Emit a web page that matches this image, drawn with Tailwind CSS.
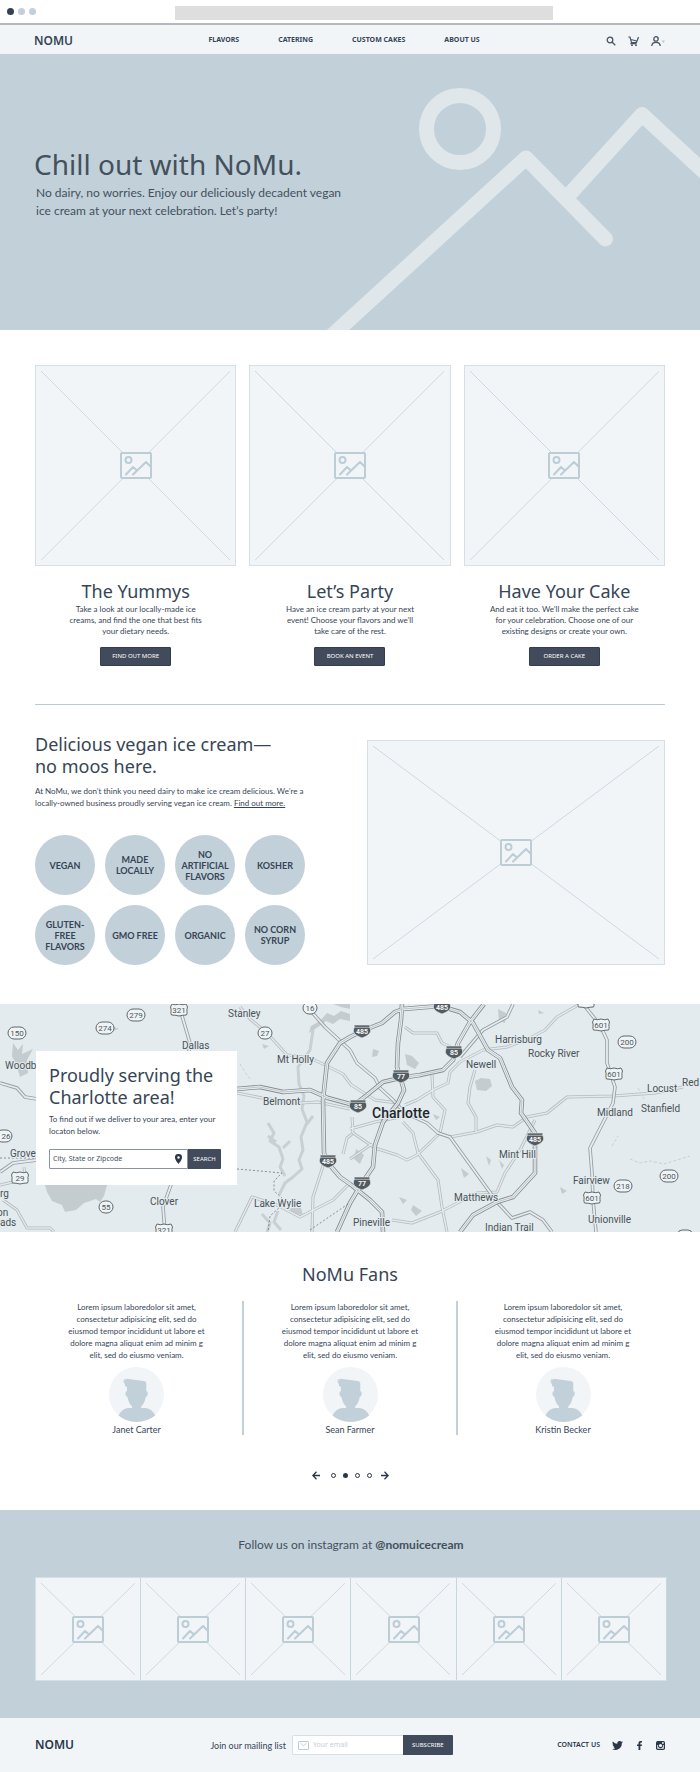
<!DOCTYPE html>
<html lang="en">
  <head>
    <meta charset="UTF-8" />
    <meta name="viewport" content="width=device-width, initial-scale=1.0" />
    <script src="https://cdn.jsdelivr.net/npm/@tailwindcss/browser@4"></script>
    <title>NoMu Vegan Ice Cream</title>
  </head>
  <body class="bg-white text-[#364556] font-['Noto_Sans','Open_Sans',sans-serif]">
    <!-- shared icons -->
    <svg class="hidden">
      <symbol id="picture" viewBox="0 0 32 27">
        <g fill="none" stroke="#bccdd6" stroke-width="2" stroke-linecap="round" stroke-linejoin="round">
          <rect x="1" y="1" width="30" height="25" rx="1" fill="#f1f5f8" />
          <circle cx="8.500" cy="8" r="3" />
          <path d="M6 22.500 13 15l4 3.500M13 22.500 26 10l5 5" />
        </g>
      </symbol>
      <symbol id="cross" viewBox="0 0 100 100" preserveAspectRatio="none">
        <path d="M0 0 100 100M100 0 0 100" stroke="#cdd9df" stroke-width="1" vector-effect="non-scaling-stroke" />
      </symbol>
      <symbol id="avatar" viewBox="0 0 55 55">
        <circle cx="27.500" cy="27.500" r="27.500" fill="#f1f5f8" />
        <path fill="#c2d0d9" d="M14 13.500l2 .3-1.500-1.800 2.500.6.7-.9 17 2.200c1.800.3 2.600 1.200 2.600 3V24c2.200.5 1.800 5.500-.6 6-.5 4-2 7-4.500 9.200V41h4.500c4 .5 7.500 3 9.500 7.500Q38 55 27.500 55T9.500 48.500C11.500 44 15 41.500 19 41h4v-1.800c-2.500-2.200-4-5.200-4.500-9.200-2.400-.5-2.800-5.500-.6-6l.1-4c-2-.5-2.500-2-2-2.500z" />
      </symbol>
    </svg>

    <!-- browser bar -->
    <div class="relative flex items-center justify-between h-[25px] px-[7px] border-b-2 border-[#b7b7c0]">
      <div class="flex gap-1">
        <span class="size-[7px] rounded-full bg-[#364052]"></span>
        <span class="size-[7px] rounded-full bg-[#c2d0d9]"></span>
        <span class="size-[7px] rounded-full bg-[#c2d0d9]"></span>
      </div>
      <div class="absolute left-1/4 top-1.5 w-[54%] h-3.5 bg-[#dedede]"></div>
    </div>

    <header class="flex items-center justify-between h-[29px] pt-0.5 pl-[34px] pr-[35px] bg-[#f1f5f8]">
      <a href="#" class="text-[12px] font-semibold">NOMU</a>
      <nav class="flex gap-[39px] pl-[9px] text-[7px] font-bold">
        <a href="#">FLAVORS</a>
        <a href="#">CATERING</a>
        <a href="#">CUSTOM CAKES</a>
        <a href="#">ABOUT US</a>
      </nav>
      <div class="flex items-center gap-3">
        <button aria-label="Search">
          <svg class="size-[10px]" viewBox="0 0 10 10" fill="none" stroke="#4a5463" stroke-width="1.300"><circle cx="4" cy="4" r="2.800" /><path d="M6 6l3.300 3.300" /></svg>
        </button>
        <button aria-label="Cart">
          <svg class="w-[11px] h-[10px]" viewBox="0 0 11 10" fill="none" stroke="#4a5463" stroke-width="1.200"><path d="M.3 1h1.700l1.500 5.500h5L10.500 1M3 3.500l5.500 1.500M3.500 6.500 3 7.700h5.500" /><circle cx="4" cy="9.200" r=".4" /><circle cx="8" cy="9.200" r=".4" /></svg>
        </button>
        <button aria-label="Account">
          <svg class="w-[14px] h-[10px]" viewBox="0 0 14 10" fill="none" stroke="#4a5463" stroke-width="1.300"><circle cx="5" cy="2.900" r="2.200" /><path d="M.8 10c0-3 2-3.600 4.200-3.600S9.200 7 9.200 10" /><path d="M10.500 4.500h3.500l-1.700 2.500z" fill="#b9cad4" stroke="none" /></svg>
        </button>
      </div>
    </header>

    <!-- hero -->
    <section class="relative h-[276px] pt-[91px] bg-[#c2d0d9] overflow-hidden">
      <svg class="absolute inset-0 size-full" viewBox="0 0 700 276" preserveAspectRatio="xMaxYMid slice" fill="none" stroke="#dfe7eb" stroke-width="15" stroke-linecap="round" stroke-linejoin="round">
        <circle cx="460" cy="75" r="33.500" />
        <path d="M326 287 526 104l79.500 81M568 142l74-81.500 66 61" />
      </svg>
      <div class="relative text-[#43515d]">
        <h1 class="pl-[34px] text-[28px] leading-[38px]">Chill out with NoMu.</h1>
        <p class="mt-px pl-9 font-[Lato,sans-serif] text-[12px] leading-[18px]">No dairy, no worries. Enjoy our deliciously decadent vegan<br />ice cream at your next celebration. Let’s party!</p>
      </div>
    </section>

    <!-- products -->
    <section class="grid grid-cols-3 gap-x-[13px] mx-[35px] pt-[35px] pb-[38px] border-b border-[#b9cad4] text-center">
      <div>
        <div class="relative flex items-center justify-center aspect-square bg-[#f1f5f8] border border-[#d5e0e5]">
          <svg class="absolute inset-[5px] size-[calc(100%-10px)]"><use href="#cross" /></svg>
          <svg class="relative w-8 h-[27px]"><use href="#picture" /></svg>
        </div>
        <h2 class="mt-[13px] text-[18px] leading-6">The Yummys</h2>
        <p class="mt-px font-[Lato,sans-serif] text-[8px] leading-[11px]">Take a look at our locally-made ice<br />creams, and find the one that best fits<br />your dietary needs.</p>
        <button class="mt-[10px] block mx-auto w-[71px] h-[19px] rounded-[1px] bg-[#424b5b] border border-[#333d4e] text-[6px] leading-[17px] text-white">FIND OUT MORE</button>
      </div>
      <div>
        <div class="relative flex items-center justify-center aspect-square bg-[#f1f5f8] border border-[#d5e0e5]">
          <svg class="absolute inset-[5px] size-[calc(100%-10px)]"><use href="#cross" /></svg>
          <svg class="relative w-8 h-[27px]"><use href="#picture" /></svg>
        </div>
        <h2 class="mt-[13px] text-[18px] leading-6">Let’s Party</h2>
        <p class="mt-px font-[Lato,sans-serif] text-[8px] leading-[11px]">Have an ice cream party at your next<br />event! Choose your flavors and we’ll<br />take care of the rest.</p>
        <button class="mt-[10px] block mx-auto w-[71px] h-[19px] rounded-[1px] bg-[#424b5b] border border-[#333d4e] text-[6px] leading-[17px] text-white">BOOK AN EVENT</button>
      </div>
      <div>
        <div class="relative flex items-center justify-center aspect-square bg-[#f1f5f8] border border-[#d5e0e5]">
          <svg class="absolute inset-[5px] size-[calc(100%-10px)]"><use href="#cross" /></svg>
          <svg class="relative w-8 h-[27px]"><use href="#picture" /></svg>
        </div>
        <h2 class="mt-[13px] text-[18px] leading-6">Have Your Cake</h2>
        <p class="mt-px font-[Lato,sans-serif] text-[8px] leading-[11px]">And eat it too. We’ll make the perfect cake<br />for your celebration. Choose one of our<br />existing designs or create your own.</p>
        <button class="mt-[10px] block mx-auto w-[71px] h-[19px] rounded-[1px] bg-[#424b5b] border border-[#333d4e] text-[6px] leading-[17px] text-white">ORDER A CAKE</button>
      </div>
    </section>

    <!-- about -->
    <section class="flex justify-between px-[35px] pt-7 pb-[39px]">
      <div>
        <h2 class="text-[18px] leading-[22px]">Delicious vegan ice cream—<br />no moos here.</h2>
        <p class="mt-2 font-[Lato,sans-serif] text-[8px] leading-3">At NoMu, we don’t think you need dairy to make ice cream delicious. We’re a<br />locally-owned business proudly serving vegan ice cream. <a href="#" class="underline">Find out more.</a></p>
        <ul class="grid grid-cols-[repeat(4,60px)] auto-rows-[60px] gap-[10px] mt-[26px] font-[Lato,sans-serif] text-[9px] leading-[11px] font-bold text-center">
          <li class="flex items-center justify-center rounded-full bg-[#c2d0d9]">VEGAN</li>
          <li class="flex items-center justify-center rounded-full bg-[#c2d0d9]">MADE<br />LOCALLY</li>
          <li class="flex items-center justify-center rounded-full bg-[#c2d0d9]">NO<br />ARTIFICIAL<br />FLAVORS</li>
          <li class="flex items-center justify-center rounded-full bg-[#c2d0d9]">KOSHER</li>
          <li class="flex items-center justify-center rounded-full bg-[#c2d0d9]">GLUTEN-<br />FREE<br />FLAVORS</li>
          <li class="flex items-center justify-center rounded-full bg-[#c2d0d9]">GMO FREE</li>
          <li class="flex items-center justify-center rounded-full bg-[#c2d0d9]">ORGANIC</li>
          <li class="flex items-center justify-center rounded-full bg-[#c2d0d9]">NO CORN<br />SYRUP</li>
        </ul>
      </div>
      <div class="relative flex items-center justify-center w-[298px] mt-[7px] bg-[#f1f5f8] border border-[#d5e0e5]">
        <svg class="absolute inset-[5px] size-[calc(100%-10px)]"><use href="#cross" /></svg>
        <svg class="relative w-8 h-[27px]"><use href="#picture" /></svg>
      </div>
    </section>

    <!-- delivery map -->
    <section class="relative h-[228px] bg-[#e3ebee] pt-[47px] pl-9 overflow-hidden">
      <svg class="absolute inset-0 size-full" viewBox="0 0 700 228" preserveAspectRatio="xMidYMid slice">
        <defs>
          <path id="minor" d="M450 133 477 128 497 121 513 123 527 113 547 109 567 93 613 92 655 89 683 83M580 0 557 13 545 26 530 34 507 43 483 46 460 58 450 68 448 79 433 86 417 96 405 101M475 66 470 83 468 99 476 113V128M432 71 433 93 445 106 440 129 417 151 407 156 397 151 375 144 353 129 352 113M403 118 413 129 418 149 438 176 442 203 447 228M392 216 412 219 440 208 477 189 497 188 505 169 520 146 535 116M405 23 413 29 437 29 442 39 453 44M240 3 250 15 267 29 287 51 310 54 325 61 343 70 352 82M324 159 313 193 312 228M235 228 252 193 277 201 300 213 333 196 350 179M3 196 17 206 27 224H50L54 228M237 89 262 94 300 99 318 98 350 105M350 125 375 118 400 113M350 155 372 140M350 80 375 96 398 99M24 163 25 172M0 181 13 178M343 150 347 134 352 130" />
          <path id="middle" d="M350 46 357 59 375 74 380 84 393 96 405 109 427 119 438 129 450 133 497 198 512 214 530 208 543 216 552 228M583 0 600 21 607 36 607 59 615 83 613 99 590 144 592 169 593 196 596 228M513 0 507 13 483 26 460 53M180 5 190 39 188 55M172 178 163 203 165 228M0 79 17 84 25 93 37 95M0 168 13 159 37 156M310 6 325 23 350 46" />
          <path id="major" d="M237 85 260 83 283 88 310 86 328 94 350 100M350 104 367 91 383 78 400 74 420 71 443 66 453 56 458 39 470 18 484 0M402 0 401 16 398 39 397 63 401 76 404 86 398 99 383 118 375 141 373 163 362 179 350 199 337 228M350 33 340 39 327 59 323 96 324 149 328 159 340 173 350 180 370 196 382 208 383 228M350 33 362 27 382 19 395 8 403 5 440 2 460 8 473 19 488 46 500 54 512 83 522 96 521 109 535 129V169L513 193 497 198 473 211 460 228" />
          <g id="interstate">
            <path d="M-8-6H8L7.700-4 8.700-1C8.700 3 5 5 0 7-5 5-8.700 3-8.700-1L-7.700-4z" fill="#535b60" stroke="#e3ebee" stroke-width=".7" />
            <path d="M-8-3.700H8" stroke="#c4cbcf" stroke-width=".8" />
          </g>
          <path id="shield" d="M-7-6Q-4-4.500 0-6 4-4.500 7-6L8.500-3C7 0 9 3 7.500 5Q4 5 0 6-4 5-7.500 5C-9 3-7 0-8.500-3z" fill="#eef3f5" stroke="#62696d" />
        </defs>
        <!-- water -->
        <g fill="#c5cccf">
          <path d="M45 181H107L104 192 100 198 96 195 84 199 76 206 65 208 62 201 52 197 47 188zM13 39 18 46 23 40 22 50 33 45 27 56 28 69 20 73 17 63 12 52zM475 77 481 74 490 75 492 82 486 87 477 86zM405 50 412 52 419 59 415 65 407 61zM498 5 506 9 505 19 499 17zM373 45 379 47 377 52 372 53zM486 152 491 156 489 162zM499 156 504 161 502 165zM461 164 469 170 464 174zM356 145 364 151 360 160 354 155zM413 201 422 207 416 212 411 206zM399 193 407 196 403 200zM433 110 440 113 436 116zM560 183 567 187 562 190zM538 6 544 9 539 10zM290 204 301 204 303 211 292 210zM327 9 334 12 341 7 350 10V17L340 15 333 20 326 17 318 23 309 29 311 22 320 17zM333 0 350 0V5L341 3zM112 22 119 25 113 27zM262 40 269 42 264 45z" />
        </g>
        <g fill="none" stroke="#c9d0d3" stroke-width="3" stroke-linejoin="round">
          <path d="M313 26 310 46 298 63 299 80 304 92 302 105 307 118 301 133 303 146 299 156 302 165 293 173 285 179 279 191M268 119 274 129 270 137 279 143 283 155 280 163 285 172M268 132 276 138M290 137 283 144M313 112 306 121M262 210 270 219 267 228M278 207 274 218 281 226" />
          <path d="M630 155 640 159 650 157 664 160 677 156 690 152M612 142 618 132M638 84 644 95M250 75 245 68 240 60" stroke-width="1" stroke-dasharray="3 2" />
        </g>
        <!-- roads -->
        <g fill="none" stroke-linejoin="round">
          <use href="#minor" stroke="#b3babd" stroke-width="3" />
          <use href="#minor" stroke="#e3e9ec" stroke-width="1.500" />
          <use href="#middle" stroke="#979ea2" stroke-width="3.500" />
          <use href="#middle" stroke="#e6ecef" stroke-width="1.800" />
          <use href="#major" stroke="#858c90" stroke-width="4.500" />
          <use href="#major" stroke="#e9eff1" stroke-width="2.800" />
          <use href="#major" stroke="#a3aaad" stroke-width=".6" />
          <path d="M237 165 260 167 282 169 274 177 274 187 282 194 280 203 270 212 268 228M310 226 348 200M0 154H37" stroke="#6f767a" stroke-dasharray="2 2" stroke-width=".8" />
        </g>
        <!-- route badges -->
        <g fill="#eef3f5" stroke="#62696d">
          <rect x="8" y="23" width="18" height="12" rx="6" />
          <rect x="96" y="18" width="18" height="12" rx="6" />
          <rect x="127" y="5" width="18" height="12" rx="6" />
          <rect x="258" y="23" width="14" height="12" rx="6" />
          <rect x="303" y="-2" width="14" height="12" rx="6" />
          <rect x="-4" y="126" width="16" height="12" rx="6" />
          <rect x="99" y="197" width="14" height="12" rx="6" />
          <rect x="618" y="32" width="18" height="12" rx="6" />
          <rect x="660" y="166" width="18" height="12" rx="6" />
          <rect x="614" y="176" width="18" height="12" rx="6" />
          <rect x="678" y="226" width="14" height="12" rx="4" />
        </g>
        <use href="#shield" x="179" y="6" />
        <use href="#shield" x="164" y="226" />
        <use href="#shield" x="20" y="174" />
        <use href="#shield" x="601" y="21" />
        <use href="#shield" x="614" y="70" />
        <use href="#shield" x="592" y="194" />
        <use href="#shield" x="586" y="-2" />
        <use href="#interstate" x="328" y="157" />
        <use href="#interstate" x="362" y="27" />
        <use href="#interstate" x="442" y="3" />
        <use href="#interstate" x="454" y="48" />
        <use href="#interstate" x="401" y="72" />
        <use href="#interstate" x="358" y="102" />
        <use href="#interstate" x="535" y="135" />
        <use href="#interstate" x="362" y="179" />
        <g class="font-[Roboto,sans-serif] text-[8px]" text-anchor="middle" fill="#4e565b">
          <text x="17" y="32">150</text>
          <text x="105" y="27">274</text>
          <text x="136" y="14">279</text>
          <text x="265" y="32">27</text>
          <text x="310" y="7">16</text>
          <text x="6" y="135">26</text>
          <text x="106" y="206">55</text>
          <text x="627" y="41">200</text>
          <text x="669" y="175">200</text>
          <text x="623" y="185">218</text>
          <text x="179" y="9">321</text>
          <text x="164" y="229">321</text>
          <text x="20" y="177">29</text>
          <text x="601" y="24">601</text>
          <text x="614" y="73">601</text>
          <text x="592" y="197">601</text>
        </g>
        <g class="font-[Roboto,sans-serif] text-[7px] font-bold" text-anchor="middle" fill="#f4f7f8">
          <text x="328" y="160">485</text>
          <text x="362" y="30">485</text>
          <text x="442" y="6">485</text>
          <text x="454" y="51">85</text>
          <text x="401" y="75">77</text>
          <text x="358" y="105">85</text>
          <text x="535" y="138">485</text>
          <text x="362" y="182">77</text>
        </g>
        <!-- place names -->
        <g class="font-[Roboto,sans-serif] text-[10px]" fill="#4a5257" stroke="#e3ebee" stroke-width="2" stroke-linejoin="round" paint-order="stroke">
          <text x="228" y="13">Stanley</text>
          <text x="182" y="45">Dallas</text>
          <text x="5" y="65">Woodb</text>
          <text x="277" y="59">Mt Holly</text>
          <text x="263" y="101">Belmont</text>
          <text x="10" y="153">Grove</text>
          <text x="0" y="193">rg</text>
          <text x="-3" y="212">on</text>
          <text x="0" y="222">ads</text>
          <text x="150" y="201">Clover</text>
          <text x="254" y="203">Lake Wylie</text>
          <text x="495" y="39">Harrisburg</text>
          <text x="528" y="53">Rocky River</text>
          <text x="466" y="64">Newell</text>
          <text x="647" y="88">Locust</text>
          <text x="682" y="82">Red</text>
          <text x="641" y="108">Stanfield</text>
          <text x="597" y="112">Midland</text>
          <text x="499" y="154">Mint Hill</text>
          <text x="573" y="180">Fairview</text>
          <text x="454" y="197">Matthews</text>
          <text x="353" y="222">Pineville</text>
          <text x="485" y="227">Indian Trail</text>
          <text x="588" y="219">Unionville</text>
          <text x="372" y="114" class="text-[14px] font-medium" fill="#20272b">Charlotte</text>
        </g>
      </svg>
      <div class="relative w-[201px] h-[134px] pt-[13px] px-[13px] bg-white">
        <h2 class="text-[18px] leading-[22px] whitespace-nowrap">Proudly serving the<br />Charlotte area!</h2>
        <p class="mt-[5px] font-[Lato,sans-serif] text-[8px] leading-3 whitespace-nowrap">To find out if we deliver to your area, enter your<br />locaton below.</p>
        <form class="flex mt-3 w-[172px] h-5">
          <label class="relative flex-1 flex items-center border border-[#8a929c] rounded-l-[1px]">
            <input type="text" aria-label="City, State or Zipcode" placeholder="City, State or Zipcode" class="w-full pl-[3px] pr-4 text-[7px] outline-none placeholder:text-[#43515d]" />
            <svg class="absolute right-[5px] w-[7px] h-[10px]" viewBox="0 0 7 10"><path d="M3.500 0A3.400 3.400 0 0 0 0 3.500C0 6 3.500 10 3.500 10S7 6 7 3.500A3.400 3.400 0 0 0 3.500 0zm0 2.200a1.200 1.200 0 1 1 0 2.500 1.200 1.200 0 0 1 0-2.500z" fill="#2b3648" /></svg>
          </label>
          <button type="button" class="w-[33px] rounded-r-[1px] bg-[#424b5b] text-[6px] text-white">SEARCH</button>
        </form>
      </div>
    </section>

    <!-- testimonials -->
    <section class="pt-[30px] pb-[29px] text-center">
      <h2 class="text-[18px] leading-6">NoMu Fans</h2>
      <div class="grid grid-cols-[213fr_214fr_210fr] mt-[15px] pl-[31px] pr-8">
        <figure class="border-r-2 border-[#c2d0d9]">
          <blockquote class="font-[Lato,sans-serif] text-[8px] leading-3">Lorem ipsum laboredolor sit amet,<br />consectetur adipisicing elit, sed do<br />eiusmod tempor incididunt ut labore et<br />dolore magna aliquat enim ad minim g<br />elit, sed do eiusmo veniam.</blockquote>
          <svg class="mx-auto mt-1.5 size-[55px]"><use href="#avatar" /></svg>
          <figcaption class="mt-[3px] font-[Lato,sans-serif] text-[9px] leading-[10px]">Janet Carter</figcaption>
        </figure>
        <figure class="border-r-2 border-[#c2d0d9]">
          <blockquote class="font-[Lato,sans-serif] text-[8px] leading-3">Lorem ipsum laboredolor sit amet,<br />consectetur adipisicing elit, sed do<br />eiusmod tempor incididunt ut labore et<br />dolore magna aliquat enim ad minim g<br />elit, sed do eiusmo veniam.</blockquote>
          <svg class="mx-auto mt-1.5 size-[55px]"><use href="#avatar" /></svg>
          <figcaption class="mt-[3px] font-[Lato,sans-serif] text-[9px] leading-[10px]">Sean Farmer</figcaption>
        </figure>
        <figure>
          <blockquote class="font-[Lato,sans-serif] text-[8px] leading-3">Lorem ipsum laboredolor sit amet,<br />consectetur adipisicing elit, sed do<br />eiusmod tempor incididunt ut labore et<br />dolore magna aliquat enim ad minim g<br />elit, sed do eiusmo veniam.</blockquote>
          <svg class="mx-auto mt-1.5 size-[55px]"><use href="#avatar" /></svg>
          <figcaption class="mt-[3px] font-[Lato,sans-serif] text-[9px] leading-[10px]">Kristin Becker</figcaption>
        </figure>
      </div>
      <div class="flex items-center justify-center h-3 mt-[34px]">
        <button aria-label="Previous"><svg class="w-2 h-[9px] mr-[11px]" viewBox="0 0 8 9" fill="none" stroke="#2b3648" stroke-width="1.300"><path d="M8 4.500H1M4.500 .8 .9 4.500l3.600 3.700" /></svg></button>
        <div class="flex items-center gap-[7px]">
          <button aria-label="Page 1" class="size-[5px] rounded-full border border-[#2b3648]"></button>
          <button aria-label="Page 2" class="size-[5px] rounded-full bg-[#2b3648]"></button>
          <button aria-label="Page 3" class="size-[5px] rounded-full border border-[#2b3648]"></button>
          <button aria-label="Page 4" class="size-[5px] rounded-full border border-[#2b3648]"></button>
        </div>
        <button aria-label="Next"><svg class="w-2 h-[9px] ml-[9px]" viewBox="0 0 8 9" fill="none" stroke="#2b3648" stroke-width="1.300"><path d="M0 4.500h7M3.500 .8l3.600 3.700-3.600 3.700" /></svg></button>
      </div>
    </section>

    <!-- instagram -->
    <section class="pt-[26px] pb-[37px] pl-[35px] pr-[33px] bg-[#c2d0d9]">
      <p class="text-center font-[Lato,sans-serif] text-[12px] leading-[18px] text-[#43515d]">Follow us on instagram at <a href="#" class="font-bold">@nomuicecream</a></p>
      <div class="grid grid-cols-6 h-[104px] mt-[23px] border-l border-y border-[#d5e0e5]">
        <div class="relative flex items-center justify-center bg-[#f1f5f8] border-r border-[#c8d6dd]">
          <svg class="absolute inset-[5px] size-[calc(100%-10px)]"><use href="#cross" /></svg>
          <svg class="relative w-8 h-[27px]"><use href="#picture" /></svg>
        </div>
        <div class="relative flex items-center justify-center bg-[#f1f5f8] border-r border-[#c8d6dd]">
          <svg class="absolute inset-[5px] size-[calc(100%-10px)]"><use href="#cross" /></svg>
          <svg class="relative w-8 h-[27px]"><use href="#picture" /></svg>
        </div>
        <div class="relative flex items-center justify-center bg-[#f1f5f8] border-r border-[#c8d6dd]">
          <svg class="absolute inset-[5px] size-[calc(100%-10px)]"><use href="#cross" /></svg>
          <svg class="relative w-8 h-[27px]"><use href="#picture" /></svg>
        </div>
        <div class="relative flex items-center justify-center bg-[#f1f5f8] border-r border-[#c8d6dd]">
          <svg class="absolute inset-[5px] size-[calc(100%-10px)]"><use href="#cross" /></svg>
          <svg class="relative w-8 h-[27px]"><use href="#picture" /></svg>
        </div>
        <div class="relative flex items-center justify-center bg-[#f1f5f8] border-r border-[#c8d6dd]">
          <svg class="absolute inset-[5px] size-[calc(100%-10px)]"><use href="#cross" /></svg>
          <svg class="relative w-8 h-[27px]"><use href="#picture" /></svg>
        </div>
        <div class="relative flex items-center justify-center bg-[#f1f5f8] border-r border-[#c8d6dd]">
          <svg class="absolute inset-[5px] size-[calc(100%-10px)]"><use href="#cross" /></svg>
          <svg class="relative w-8 h-[27px]"><use href="#picture" /></svg>
        </div>
      </div>
    </section>

    <footer class="flex items-center justify-between h-[54px] px-[35px] bg-[#f1f5f8]">
      <a href="#" class="text-[12px] font-semibold text-[#2b3648]">NOMU</a>
      <form class="flex items-center pl-8">
        <label for="email" class="mr-1.5 font-[Lato,sans-serif] text-[9px]">Join our mailing list</label>
        <div class="flex items-center gap-1 w-[111px] h-5 pl-[5px] bg-white border border-r-0 border-[#d5e0e5] rounded-l-[2px]">
          <svg class="w-[11px] h-[9px]" viewBox="0 0 11 9" fill="none" stroke="#bccdd6"><rect x=".5" y=".5" width="10" height="8" rx=".5" /><path d="M2.500 2.200 5.500 4.800l3-2.600" /></svg>
          <input id="email" type="email" placeholder="Your email" class="w-20 text-[7px] outline-none placeholder:text-[#c2d0d9]" />
        </div>
        <button type="button" class="w-[50px] h-5 rounded-r-[1px] bg-[#424b5b] text-[6px] text-white">SUBSCRIBE</button>
      </form>
      <div class="flex items-center text-[7px] font-semibold text-[#2b3648]">
        <a href="#">CONTACT US</a>
        <a href="#" aria-label="Twitter" class="ml-3"><svg class="w-[11px] h-[9px]" viewBox="0 0 24 20" fill="#2b3648"><path d="M24 2.400a10 10 0 0 1-2.800.8A5 5 0 0 0 23.300.500a10 10 0 0 1-3.100 1.200A4.900 4.900 0 0 0 11.800 6.200 14 14 0 0 1 1.700 1a4.900 4.900 0 0 0 1.500 6.600 5 5 0 0 1-2.200-.6 4.900 4.900 0 0 0 3.900 4.900 5 5 0 0 1-2.200.1 4.900 4.900 0 0 0 4.600 3.400A10 10 0 0 1 0 17.500 14 14 0 0 0 21.500 5 10 10 0 0 0 24 2.400z" /></svg></a>
        <a href="#" aria-label="Facebook" class="ml-3.5"><svg class="w-[5px] h-[9px]" viewBox="0 0 10 18" fill="#2b3648"><path d="M3 18V10H0V6.800h3V4.500C3 1.600 4.500 0 7.300 0H10v3.200H8.200C7 3.200 6.700 3.700 6.700 4.700v2.100H10L9.600 10H6.700v8z" /></svg></a>
        <a href="#" aria-label="Instagram" class="ml-3.5"><svg class="size-[9px]" viewBox="0 0 18 18"><rect width="18" height="18" rx="3.500" fill="#2b3648" /><path d="M2.500 8v6.500q0 1 1 1h11q1 0 1-1V8H14a5.200 5.200 0 1 1-10 0z" fill="#f1f5f8" /><circle cx="9" cy="9" r="3.200" fill="#f1f5f8" /><rect x="12" y="2.500" width="3.500" height="3" fill="#f1f5f8" /></svg></a>
      </div>
    </footer>
  </body>
</html>
